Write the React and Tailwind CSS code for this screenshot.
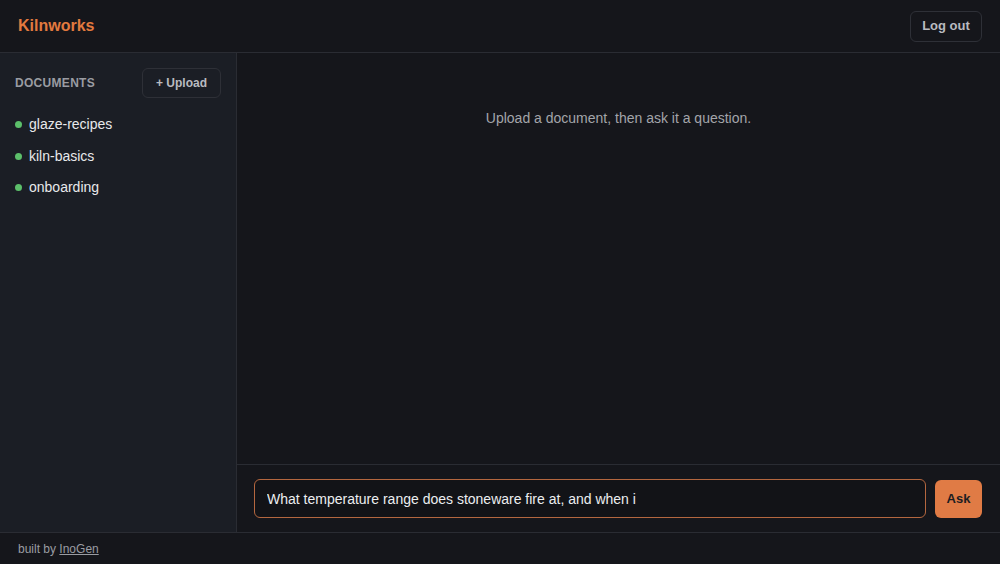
import React, { useState } from "react";

const DOCS = ["glaze-recipes", "kiln-basics", "onboarding"];

const App = () => {
  const [question, setQuestion] = useState(
    "What temperature range does stoneware fire at, and when i"
  );

  return (
    <div
      className="flex flex-col h-screen bg-[#15161b] text-gray-200"
      style={{ fontFamily: '"Liberation Sans", Arial, sans-serif' }}
    >
      {/* header */}
      <header className="h-[53px] shrink-0 flex items-center justify-between pl-[18px] pr-[18px] border-b border-[#2a2c33]">
        <span className="text-[#e27a3f] font-bold text-[16px]">Kilnworks</span>
        <button className="h-[31px] w-[72px] rounded-md border border-[#2e3037] text-[13px] font-bold text-[#b9bbc0]">
          Log out
        </button>
      </header>

      <div className="flex flex-1 min-h-0">
        {/* sidebar */}
        <aside className="w-[237px] shrink-0 bg-[#1b1e25] border-r border-[#2a2c33] pt-[15px] px-[15px]">
          <div className="flex items-center justify-between">
            <span className="text-[12px] font-bold tracking-wide text-[#9a9ca2]">
              DOCUMENTS
            </span>
            <button className="h-[30px] w-[79px] pb-[1px] rounded-md border border-[#2e3037] text-[12px] font-bold text-[#b9bbc0]">
              + Upload
            </button>
          </div>
          <ul className="mt-[11px] flex flex-col">
            {DOCS.map((d) => (
              <li key={d} className="h-[31.5px] flex items-center gap-[7px] text-[14px] text-[#e8e9eb]">
                <span className="w-[7px] h-[7px] rounded-full bg-[#5cbf6a]" />
                {d}
              </li>
            ))}
          </ul>
        </aside>

        {/* main */}
        <main className="flex-1 flex flex-col min-w-0">
          <div className="flex-1 flex justify-center pt-[55px]">
            <p className="text-[14px] text-[#a3a5aa]">
              Upload a document, then ask it a question.
            </p>
          </div>
          <div className="h-[68px] shrink-0 border-t border-[#2a2c33] flex items-center gap-[9px] pl-[17px] pr-[18px]">
            <input
              className="flex-1 h-[39px] rounded-md border border-[#b4673f] bg-[#121317] px-[12px] text-[14px] text-[#eceef0] outline-none"
              value={question}
              onChange={(e) => setQuestion(e.target.value)}
            />
            <button className="h-[38px] w-[47px] rounded-md bg-[#e07b45] text-[13px] font-bold text-[#1c1d22]">
              Ask
            </button>
          </div>
        </main>
      </div>

      {/* footer */}
      <footer className="h-[32px] shrink-0 border-t border-[#2a2c33] flex items-center pl-[18px] text-[12px] text-[#9a9ca2]">
        built by&nbsp;<a className="underline">InoGen</a>
      </footer>
    </div>
  );
};

export default App;
